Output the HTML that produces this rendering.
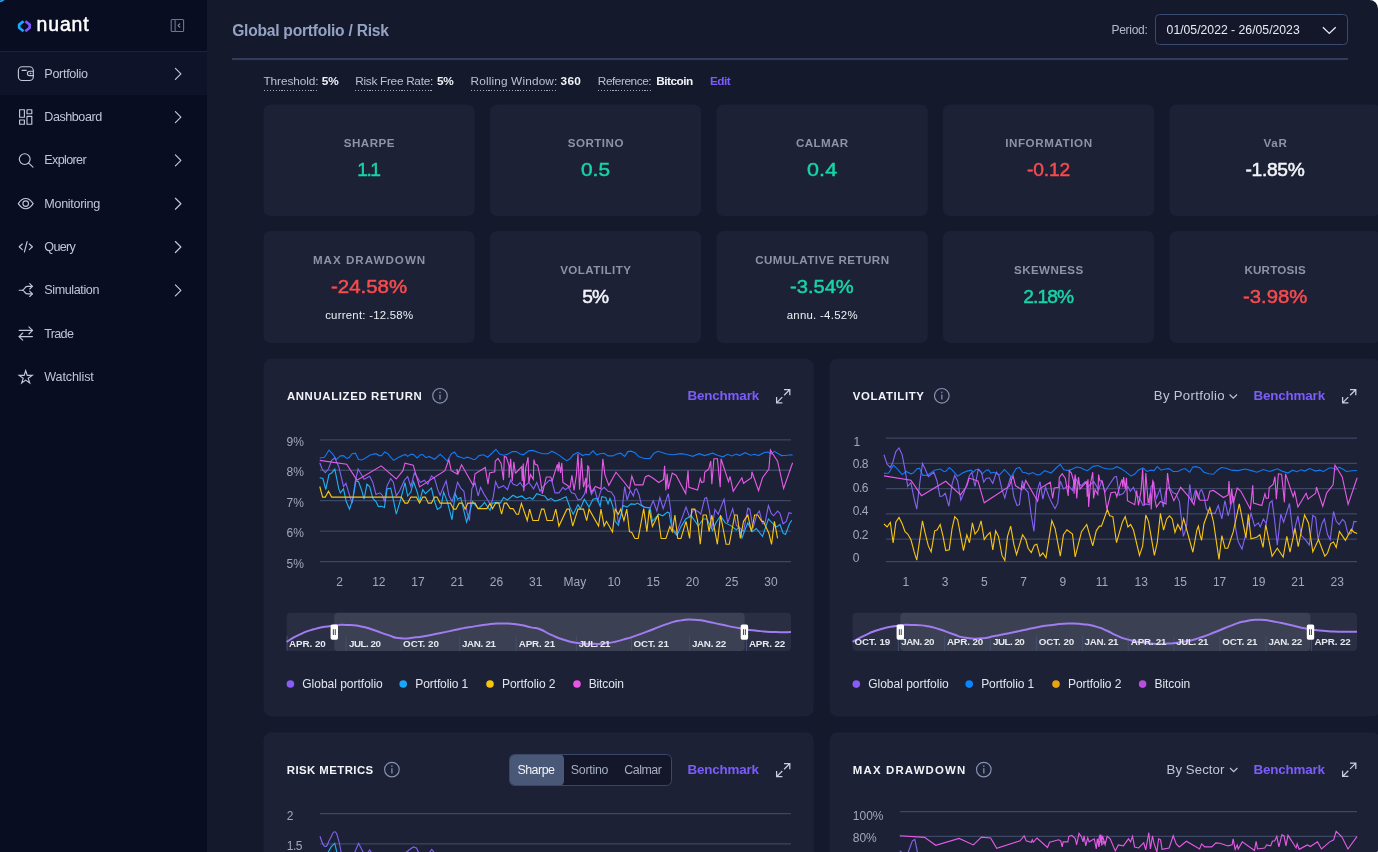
<!DOCTYPE html>
<html lang="en">
<head>
<meta charset="utf-8">
<title>Nuant - Global portfolio / Risk</title>
<style>
*{box-sizing:border-box;margin:0;padding:0}
html,body{width:1378px;height:852px;overflow:hidden;background:#ffffff}
body{font-family:"Liberation Sans", sans-serif;color:#c9cede;position:relative}
#app{position:absolute;left:0;top:0;width:1378px;height:852px;background:#14192c;border-top-right-radius:8.5px;border-bottom-right-radius:2px;overflow:hidden;will-change:transform}
.a{position:absolute}
.t{position:absolute;white-space:pre;line-height:1}
#side{position:absolute;left:0;top:0;width:207px;height:852px;background:#080d22}
#side .hd{position:absolute;left:0;top:0;width:207px;height:52px;border-bottom:1px solid #1d2238}
#side .act{position:absolute;left:0;top:52px;width:207px;height:43px;background:#0e132a}
#main{position:absolute;left:0;top:0;width:1378px;height:852px}
.hr{position:absolute;left:232px;top:58px;width:1116px;height:2px;background:#323d5b}
.sel{position:absolute;left:1155px;top:14px;width:193px;height:31px;border:1px solid #3a4a70;border-radius:4.5px;background:#131729}
.u{position:absolute;top:90px;height:1px;background:repeating-linear-gradient(90deg,#a2a8bd 0,#a2a8bd 1.1px,transparent 1.1px,transparent 2.9px)}
.card{position:absolute;width:211.2px;height:111.5px}
.panel{position:absolute;overflow:hidden}
.tg{position:absolute;left:509.3px;top:753.9px;width:162.6px;height:31.8px;border:1px solid #3a4767;border-radius:5.5px;background:#131729;overflow:hidden}
.tg i{position:absolute;left:-1px;top:-1px;width:55px;height:31.8px;background:#4a5878;border-radius:5px}
</style>
</head>
<body>
<div id="app">
<main id="main">
<header><span class="t" style="left:232.20px;top:23.00px;font-size:15.6px;color:#95a3c3;font-weight:bold;letter-spacing:-0.242px;">Global portfolio / Risk</span><div class="sel"></div><span class="t" style="left:1111.50px;top:24.00px;font-size:12px;color:#b4bacb;letter-spacing:-0.289px;">Period:</span><span class="t" style="left:1166.60px;top:24.00px;font-size:12.2px;color:#e9ebf3;letter-spacing:0.012px;">01/05/2022 - 26/05/2023</span><svg class="a" style="left:1320px;top:24px" width="18" height="12" viewBox="1320 24 18 12" fill="none"><path d="M1322.9 27.2L1329.3 33.4L1335.7 27.2" stroke="#e9ebf3" stroke-width="1.3"/></svg></header>
<div class="hr"></div>
<section id="params"><span class="t" style="left:263.50px;top:76.00px;font-size:11.8px;color:#bcc1d1;letter-spacing:-0.083px;">Threshold:</span><span class="t" style="left:321.80px;top:76.00px;font-size:11.8px;color:#f3f4f9;font-weight:bold;letter-spacing:-0.062px;">5%</span><span class="t" style="left:355.30px;top:76.00px;font-size:11.8px;color:#bcc1d1;letter-spacing:-0.290px;">Risk Free Rate:</span><span class="t" style="left:437.00px;top:76.00px;font-size:11.8px;color:#f3f4f9;font-weight:bold;letter-spacing:-0.262px;">5%</span><span class="t" style="left:470.50px;top:76.00px;font-size:11.8px;color:#bcc1d1;letter-spacing:0.159px;">Rolling Window:</span><span class="t" style="left:560.60px;top:76.00px;font-size:11.8px;color:#f3f4f9;font-weight:bold;letter-spacing:0.256px;">360</span><span class="t" style="left:597.80px;top:76.00px;font-size:11.8px;color:#bcc1d1;letter-spacing:-0.435px;">Reference:</span><span class="t" style="left:656.20px;top:76.00px;font-size:11.8px;color:#f3f4f9;font-weight:bold;letter-spacing:-0.497px;">Bitcoin</span><span class="t" style="left:710.00px;top:76.00px;font-size:11.8px;color:#7c5cfc;font-weight:bold;letter-spacing:-0.560px;">Edit</span><div class="u" style="left:263.5px;width:54.8px"></div><div class="u" style="left:355.3px;width:77.9px"></div><div class="u" style="left:470.5px;width:86.8px"></div><div class="u" style="left:597.8px;width:53.8px"></div></section>
<svg class="a" style="left:0;top:0" width="1378" height="852" viewBox="0 0 1378 852" fill="#1c2135"><rect x="263.50" y="104.4" width="211.2" height="111.6" rx="7"/><rect x="490.00" y="104.4" width="211.2" height="111.6" rx="7"/><rect x="716.50" y="104.4" width="211.2" height="111.6" rx="7"/><rect x="943.00" y="104.4" width="211.2" height="111.6" rx="7"/><rect x="1169.50" y="104.4" width="211.2" height="111.6" rx="7"/><rect x="263.50" y="231.0" width="211.2" height="112.0" rx="7"/><rect x="490.00" y="231.0" width="211.2" height="112.0" rx="7"/><rect x="716.50" y="231.0" width="211.2" height="112.0" rx="7"/><rect x="943.00" y="231.0" width="211.2" height="112.0" rx="7"/><rect x="1169.50" y="231.0" width="211.2" height="112.0" rx="7"/><rect x="263.5" y="358.6" width="550.2" height="357.8" rx="8"/><rect x="829.5" y="358.6" width="551" height="357.8" rx="8"/><rect x="263.5" y="732.2" width="550.2" height="140" rx="8"/><rect x="829.5" y="732.2" width="551" height="140" rx="8"/></svg>
<section id="stats">
<div class="card" style="left:263.50px;top:104.5px"><span class="t" style="left:80.25px;top:32.50px;font-size:11.6px;color:#8e93a6;font-weight:bold;letter-spacing:0.474px;">SHARPE</span><span class="t" style="left:93.76px;top:55.50px;font-size:19.2px;color:#17d4a6;letter-spacing:-1.500px;-webkit-text-stroke:0.5px #17d4a6;">1.1</span></div>
<div class="card" style="left:490.00px;top:104.5px"><span class="t" style="left:77.75px;top:32.50px;font-size:11.6px;color:#8e93a6;font-weight:bold;letter-spacing:0.479px;">SORTINO</span><span class="t" style="left:91.10px;top:55.50px;font-size:19.2px;color:#17d4a6;-webkit-text-stroke:0.5px #17d4a6;transform:scaleX(1.087);transform-origin:0 0;">0.5</span></div>
<div class="card" style="left:716.50px;top:104.5px"><span class="t" style="left:79.60px;top:32.50px;font-size:11.6px;color:#8e93a6;font-weight:bold;letter-spacing:0.353px;">CALMAR</span><span class="t" style="left:90.50px;top:55.50px;font-size:19.2px;color:#17d4a6;letter-spacing:0.138px;-webkit-text-stroke:0.5px #17d4a6;transform:scaleX(1.12);transform-origin:0 0;">0.4</span></div>
<div class="card" style="left:943.00px;top:104.5px"><span class="t" style="left:62.15px;top:32.50px;font-size:11.6px;color:#8e93a6;font-weight:bold;letter-spacing:0.596px;">INFORMATION</span><span class="t" style="left:84.10px;top:55.50px;font-size:19.2px;color:#f74b4e;letter-spacing:-0.184px;-webkit-text-stroke:0.5px #f74b4e;">-0.12</span></div>
<div class="card" style="left:1169.50px;top:104.5px"><span class="t" style="left:93.90px;top:32.50px;font-size:11.6px;color:#8e93a6;font-weight:bold;letter-spacing:0.739px;">VaR</span><span class="t" style="left:75.95px;top:55.50px;font-size:19.2px;color:#f3f4f9;letter-spacing:-0.299px;-webkit-text-stroke:0.5px #f3f4f9;">-1.85%</span></div>
<div class="card" style="left:263.50px;top:231.0px"><span class="t" style="left:49.45px;top:23.00px;font-size:11.6px;color:#8e93a6;font-weight:bold;letter-spacing:1.016px;">MAX DRAWDOWN</span><span class="t" style="left:67.50px;top:46.00px;font-size:19.2px;color:#f74b4e;-webkit-text-stroke:0.5px #f74b4e;transform:scaleX(1.066);transform-origin:0 0;">-24.58%</span><span class="t" style="left:61.65px;top:79.00px;font-size:11.4px;color:#eceef5;letter-spacing:0.245px;">current: -12.58%</span></div>
<div class="card" style="left:490.00px;top:231.0px"><span class="t" style="left:70.15px;top:33.00px;font-size:11.6px;color:#8e93a6;font-weight:bold;letter-spacing:0.459px;">VOLATILITY</span><span class="t" style="left:92.25px;top:56.00px;font-size:19.2px;color:#f3f4f9;letter-spacing:-1.034px;-webkit-text-stroke:0.5px #f3f4f9;">5%</span></div>
<div class="card" style="left:716.50px;top:231.0px"><span class="t" style="left:38.65px;top:23.00px;font-size:11.6px;color:#8e93a6;font-weight:bold;letter-spacing:0.452px;">CUMULATIVE RETURN</span><span class="t" style="left:73.75px;top:46.00px;font-size:19.2px;color:#17d4a6;-webkit-text-stroke:0.5px #17d4a6;transform:scaleX(1.048);transform-origin:0 0;">-3.54%</span><span class="t" style="left:70.15px;top:79.00px;font-size:11.4px;color:#eceef5;letter-spacing:0.285px;">annu. -4.52%</span></div>
<div class="card" style="left:943.00px;top:231.0px"><span class="t" style="left:71.05px;top:33.00px;font-size:11.6px;color:#8e93a6;font-weight:bold;letter-spacing:0.392px;">SKEWNESS</span><span class="t" style="left:80.20px;top:56.00px;font-size:19.2px;color:#17d4a6;letter-spacing:-0.902px;-webkit-text-stroke:0.5px #17d4a6;">2.18%</span></div>
<div class="card" style="left:1169.50px;top:231.0px"><span class="t" style="left:74.90px;top:33.00px;font-size:11.6px;color:#8e93a6;font-weight:bold;letter-spacing:0.242px;">KURTOSIS</span><span class="t" style="left:73.40px;top:56.00px;font-size:19.2px;color:#f74b4e;-webkit-text-stroke:0.5px #f74b4e;transform:scaleX(1.059);transform-origin:0 0;">-3.98%</span></div>
</section>
<section class="panel" style="left:264px;top:359px;width:550px;height:357px"><svg class="a chart" style="left:0;top:0" width="550" height="357" viewBox="264 359 550 357" fill="none" font-family='"Liberation Sans", sans-serif'><path d="M320 439.80H791" stroke="#3b4763" stroke-width="1.3"/><path d="M320 470.25H791" stroke="#3b4763" stroke-width="1.3"/><path d="M320 500.70H791" stroke="#3b4763" stroke-width="1.3"/><path d="M320 531.15H791" stroke="#3b4763" stroke-width="1.3"/><path d="M320 561.60H791" stroke="#3b4763" stroke-width="1.3"/><polyline points="319.75,457.97 324.5,457.18 328.94,450.05 332.43,453.69 336.39,459.55 340.35,455.91 343.51,455.59 346.68,458.45 349.06,457.65 352.23,453.69 355.4,453.22 358.56,459.55 361.73,460.03 365.69,457.97 369.65,455.28 372.82,454.33 375.99,453.69 379.16,455.59 381.53,455.59 384.7,451.95 387.87,453.69 391.04,457.65 393.73,460.35 397.38,457.97 401.34,455.91 405.3,454.49 407.67,456.39 410.84,454.33 413.22,454.33 417.18,457.97 420.35,454.8 422.72,454.49 425.89,457.65 429.06,456.39 434.6,459.24 440.15,454.33 443.32,457.18 447.28,461.14 451.24,454.01 454.41,451.95 457.57,456.39 460.74,457.18 463.91,458.45 467.08,457.18 470.25,457.97 473.42,459.55 475,459.55 478.96,455.59 483.71,454.8 487.67,457.18 492.43,452.74 495.91,449.26 499.55,454.01 503.51,455.28 507.48,454.33 512.23,451.63 516.19,451.63 520.15,454.01 523.32,454.8 528.86,450.84 532.82,450.37 538.37,452.43 543.12,453.69 547.87,453.69 551.83,451.16 555.79,453.22 559.75,455.59 563.71,458.76 566.88,460.66 570.05,458.76 573.22,454.8 577.97,452.43 582.72,455.59 585.89,454.33 589.06,454.8 593.02,450.84 596.66,454.8 600.15,453.69 604.11,453.22 608.07,455.91 612.82,455.91 616.78,454.01 620.74,453.22 624.7,456.39 627.87,451.63 631.04,451.16 635,452.74 638.96,456.86 644.5,458.45 650.05,458.45 654.01,453.22 657.97,451.32 661.93,452.43 666.68,454.01 673.02,454.8 680.94,453.69 687.28,454.8 692.82,456.39 699.16,453.69 704.7,455.59 712.62,453.22 717.38,455.28 722.92,456.86 727.67,454.33 731.63,455.91 736.39,454.01 739.55,455.59 745.1,452.74 750.64,455.28 754.6,454.33 758.56,455.59 764.11,452.43 768.07,452.11 771.24,454.01 774.41,451.32 777.57,453.22 781.53,455.59 787.08,455.28 791.04,454.8 792.62,455.28" stroke="#1279f2" stroke-width="1.12"/><polyline points="319.75,462.72 322.13,469.06 325.3,472.7 328.47,469.06 331.63,460.35 334.8,457.97 338.76,466.68 343.51,486.49 345.89,483.32 349.06,493.61 352.23,503.12 355.4,480.94 358.09,469.06 360.94,473.81 364.11,479.36 369.65,476.19 372.82,482.52 375.99,494.41 379.95,492.82 382.33,495.2 384.39,501.53 387.08,485.69 390.72,478.56 393.42,482.52 396.27,495.99 399.75,490.45 404.5,480.15 407.67,476.5 410.84,486.49 414.33,473.02 417.18,476.98 420.35,482.52 424.31,480.15 427.79,484.11 431.44,475.87 434.6,478.56 437.77,489.65 440.15,495.2 443.32,487.28 446.17,480.94 448.86,495.2 452.03,501.53 455.2,492.03 457.57,482.21 460.74,488.07 463.91,491.24 467.08,512.62 469.46,520.54 471.83,488.86 475,482.52 478.17,495.99 480.54,487.28 483.71,493.61 487.67,499.95 490.84,505.5 493.22,496.78 495.59,481.73 498.45,488.07 503.51,485.69 507.48,489.65 510.64,480.15 513.02,484.11 516.98,485.69 520.15,482.52 523.32,487.28 528.86,482.52 533.61,488.86 536.78,482.52 539.95,491.24 543.12,486.49 549.46,480.15 551.83,480.94 555,492.82 558.96,492.82 562.92,487.28 565.3,489.65 568.47,487.28 571.63,492.82 574.8,493.61 577.97,499.95 581.14,499.16 584.31,494.41 585.89,488.86 588.74,484.9 591.44,494.41 594.6,488.86 597.77,500.74 600.94,490.45 604.11,487.28 608.07,491.24 611.24,492.03 614.41,496.78 618.37,522.92 621.53,514.21 624.7,486.49 627.08,499.95 630.25,490.45 633.42,495.99 635,489.65 636.58,488.86 638.96,494.41 641.34,504.7 644.5,507.08 650.05,507.87 653.22,500.74 656.86,511.04 659.87,497.57 663.2,508.66 668.27,493.61 670.64,509.46 672.23,528.47 676.5,533.22 686.01,507.08 689.65,517.38 693.61,509.46 698.37,511.83 700.74,514.21 704.7,498.37 706.6,497.57 709.46,511.04 711.83,528.47 715,509.46 718.17,514.21 724.03,499.16 727.67,522.92 732.74,508.66 736.39,525.3 740.35,528.47 743.51,531.63 747.79,508.19 749.85,509.46 753.02,528.47 756.98,514.21 759.36,511.04 762.52,523.71 764.9,523.71 768.39,505.5 771.24,513.42 773.61,515.79 777.57,511.04 779.95,513.42 783.12,523.71 786.29,521.34 788.98,512.62 791.83,513.42" stroke="#8262f4" stroke-width="1.12"/><polyline points="319.75,477.77 322.92,478.56 325.77,489.65 328.94,474.6 331.63,473.02 334.8,469.06 338.76,488.86 340.35,492.82 343.51,488.86 346.21,501.53 349.53,509.14 353.02,498.37 355.87,480.94 358.56,481.73 361.73,490.45 364.11,499.16 366.96,484.11 369.65,486.49 372.82,498.37 375.99,501.53 378.37,506.6 381.53,506.29 384.39,507.55 387.08,488.86 390.72,488.07 393.73,501.53 396.27,514.21 400.54,499.95 404.98,482.52 407.67,495.99 410.84,492.03 413.53,481.73 417.18,492.03 419.55,501.53 422.72,489.65 425.42,493.61 431.44,488.07 434.6,501.53 437.3,509.46 440.94,507.08 443.63,492.03 447.28,501.53 452.03,519.75 455.2,493.61 457.57,499.16 460.74,497.57 463.91,511.04 466.6,522.13 469.46,512.62 472.62,501.53 475,504.7 478.17,508.66 481.34,506.29 484.5,502.33 490.05,510.25 492.43,503.12 496.39,502.33 500.35,503.12 503.51,497.57 507.48,499.95 513.02,495.2 516.98,497.57 521.73,495.99 525.69,499.16 529.65,497.57 532.82,499.16 536.78,493.61 541.53,495.2 544.7,495.99 547.87,499.95 551.04,498.37 555,501.22 560.54,499.16 566.09,496.78 570.05,507.87 573.22,514.21 577.97,504.7 580.35,508.66 584.31,499.16 589.06,507.08 593.02,499.16 596.98,498.37 600.15,506.29 601.73,496.78 605.69,497.57 608.07,503.91 609.97,498.37 612.82,506.29 615.2,521.34 618.37,525.3 623.12,505.5 627.08,507.08 631.04,503.91 635,504.39 637.38,503.12 641.34,505.5 644.5,507.55 650.05,507.87 652.43,521.34 658.76,514.21 662.72,515.79 667.48,512.15 669.06,512.62 672.23,530.05 676.98,535.59 680.94,526.88 685.69,518.96 691.24,515.79 698.37,526.09 703.12,518.96 707.08,518.96 712.62,530.84 715.79,522.92 720.54,515.79 725.3,522.92 730.84,525.61 736.39,530.05 738.76,526.88 741.93,537.97 747.79,522.92 752.23,531.63 756.19,528.47 762.52,536.39 768.39,518.96 772.82,523.71 776.78,526.88 779.95,524.5 783.12,533.22 785.5,534.49 789.46,523.71 791.83,520.23" stroke="#1fb0f2" stroke-width="1.12"/><polyline points="319.75,486.49 322.6,497.1 325.3,497.1 328.47,491.24 331.63,497.1 401.34,497.1 404.98,503.12 407.67,503.12 410.84,497.1 416.39,497.1 419.55,503.12 422.72,497.1 425.42,497.1 428.27,503.12 431.44,503.12 434.6,497.1 436.98,497.1 440.15,503.12 450.45,503.12 453.61,509.14 455.99,509.14 459.16,503.12 462.33,503.12 465.18,509.14 467.87,503.12 474.21,503.12 475,503.12 478.17,508.66 486.88,508.66 490.05,503.44 492.43,508.66 495.59,503.12 498.76,503.12 501.61,514.21 504.31,503.12 506.68,503.12 510.17,508.66 513.02,508.66 516.5,514.21 518.56,514.21 521.42,503.44 527.28,520.54 529.65,509.14 532.82,520.54 538.37,520.54 541.53,509.14 543.91,509.14 547.08,520.54 552.62,520.54 555.79,509.14 558.96,526.09 566.88,509.14 569.26,509.14 572.74,526.09 577.97,509.14 583.51,509.14 586.68,520.54 589.06,509.14 598.56,526.09 600.94,509.14 604.11,526.09 606.49,521.34 612.5,531.95 615.2,509.14 618.37,514.21 620.74,509.14 623.91,520.54 626.76,509.14 629.46,531.63 631.83,532.43 634.21,537.18 635,538.45 638.17,538.45 643.71,508.66 646.88,531.63 649.26,509.46 652.43,526.56 657.97,515 661.14,538.45 665.89,538.45 669.85,526.56 672.23,531.63 674.92,515 677.77,538.45 680.94,538.45 686.01,521.34 689.65,538.45 691.71,509.14 694.88,509.14 697.57,520.54 700.27,544.31 703.12,515 706.29,515 709.14,531.63 711.83,515 717.38,544.31 720.54,515 726.09,544.31 729.26,544.31 734.8,515 737.18,515 740.35,538.45 743.51,521.34 747.79,515 751.44,531.63 754.6,515 757.77,515 761.73,521.34 763.32,521.34 768.86,533.22 771.55,544.31 774.41,521.34 777.57,538.45" stroke="#f7c514" stroke-width="1.12"/><polyline points="319.75,460.35 346.68,464.31 356.98,480.15 381.22,465.89 396.27,479.04 402.92,470.64 404.98,463.2 413.22,465.1 419.55,486.96 444.9,470.64 448.86,459.55 451.24,470.64 457.57,474.29 456.78,469.06 458.37,473.02 461.53,464.78 473.42,485.69 475,473.81 485.3,467.48 487.99,484.11 489.57,473.02 494.8,471.75 495.28,461.14 497.97,458.45 501.14,463.51 503.51,480.15 504.31,456.39 506.37,457.18 509.06,465.89 509.06,477.77 510.64,458.76 512.23,480.94 513.81,461.93 515.4,473.02 516.5,472.23 521.73,466.68 522.21,480.94 523.32,463.51 523.79,491.24 525.69,468.27 528.07,457.18 528.86,482.52 530.45,474.6 533.3,479.36 533.93,459.55 535.2,464.31 537.57,465.1 539.95,476.19 542.33,493.61 546.29,476.98 550.72,476.98 552.15,480.94 555.79,469.06 557.38,464.31 558.17,471.44 558.96,461.93 560.54,473.02 561.81,462.72 562.92,482.52 570.05,487.28 571.95,475.4 574.01,490.45 576.39,475.4 577.97,454.01 579.55,489.65 581.46,457.97 583.51,487.28 585.89,477.77 586.21,493.61 587.79,465.89 588.74,466.68 589.85,484.11 591.44,492.03 595.4,486.49 600.94,488.86 602.84,458.76 604.9,474.6 608.86,485.38 615.99,472.23 623.91,481.73 629.46,488.86 631.83,476.19 635,484.9 642.92,484.9 645.3,476.98 648.47,475.4 652.43,477.77 658.76,482.52 663.51,479.36 664.62,465.89 665.89,490.45 667.16,473.81 668.27,488.86 672.23,473.02 676.19,475.4 685.69,493.61 688.07,470.64 688.86,487.28 697.57,490.13 700.27,478.56 701.53,482.52 703.91,481.73 704.7,472.23 708.66,469.06 710.72,461.14 711.83,484.11 713.89,458.76 717.38,458.76 720.23,487.28 721.02,458.76 728.47,481.73 730.05,476.5 733.22,491.24 741.93,477.77 743.51,483.32 751.44,477.77 751.91,471.75 758.56,490.76 762.52,477.77 768.86,469.06 770.45,450.05 772.82,454.01 777.57,461.14 783.59,488.54 792.62,462.72" stroke="#e55be6" stroke-width="1.12"/><text x="286.60" y="446.00" font-size="12" fill="#a3a8ba" letter-spacing="0.056">9%</text><text x="286.60" y="476.45" font-size="12" fill="#a3a8ba" letter-spacing="0.056">8%</text><text x="286.60" y="506.90" font-size="12" fill="#a3a8ba" letter-spacing="0.056">7%</text><text x="286.60" y="537.35" font-size="12" fill="#a3a8ba" letter-spacing="0.056">6%</text><text x="286.60" y="567.80" font-size="12" fill="#a3a8ba" letter-spacing="0.056">5%</text><text x="339.60" y="585.80" font-size="12" fill="#a3a8ba" text-anchor="middle">2</text><text x="378.81" y="585.80" font-size="12" fill="#a3a8ba" text-anchor="middle">12</text><text x="418.02" y="585.80" font-size="12" fill="#a3a8ba" text-anchor="middle">17</text><text x="457.23" y="585.80" font-size="12" fill="#a3a8ba" text-anchor="middle">21</text><text x="496.44" y="585.80" font-size="12" fill="#a3a8ba" text-anchor="middle">26</text><text x="535.65" y="585.80" font-size="12" fill="#a3a8ba" text-anchor="middle">31</text><text x="574.86" y="585.80" font-size="12" fill="#a3a8ba" text-anchor="middle">May</text><text x="614.07" y="585.80" font-size="12" fill="#a3a8ba" text-anchor="middle">10</text><text x="653.28" y="585.80" font-size="12" fill="#a3a8ba" text-anchor="middle">15</text><text x="692.49" y="585.80" font-size="12" fill="#a3a8ba" text-anchor="middle">20</text><text x="731.70" y="585.80" font-size="12" fill="#a3a8ba" text-anchor="middle">25</text><text x="770.91" y="585.80" font-size="12" fill="#a3a8ba" text-anchor="middle">30</text><circle cx="440" cy="395.8" r="7.3" stroke="#8893b1" stroke-width="1.15"/><path d="M440 394.5V399.6" stroke="#76809d" stroke-width="1.5"/><circle cx="440" cy="392.3" r="0.85" fill="#76809d"/><g stroke="#c9cddf" stroke-width="1.25" stroke-linecap="butt"><path d="M784.00 389.60H789.80V395.30M789.60 389.80L784.10 395.30"/><path d="M776.60 397.10V402.80H782.40M776.80 402.60L782.30 397.10"/></g><rect x="286.6" y="612.8" width="504.4" height="38.2" rx="4" fill="#2a2e43"/><rect x="334.2" y="612.8" width="410.5" height="38.2" rx="4" fill="#3b4052"/><path d="M287.1 635.8V651" stroke="#424e6e" stroke-width="1"/><path d="M346 635.8V651" stroke="#424e6e" stroke-width="1"/><path d="M401.3 635.8V651" stroke="#424e6e" stroke-width="1"/><path d="M459.6 635.8V651" stroke="#424e6e" stroke-width="1"/><path d="M516.2 635.8V651" stroke="#424e6e" stroke-width="1"/><path d="M576.4 635.8V651" stroke="#424e6e" stroke-width="1"/><path d="M631.5 635.8V651" stroke="#424e6e" stroke-width="1"/><path d="M689.6 635.8V651" stroke="#424e6e" stroke-width="1"/><path d="M746.6 635.8V651" stroke="#424e6e" stroke-width="1"/><path d="M286.60 641.89C290.69 639.56 289.75 639.12 298.87 634.91C307.99 630.70 303.27 632.21 313.96 629.25C324.65 626.29 320.25 627.49 330.94 626.04C341.63 624.59 335.98 624.78 346.04 624.91C356.10 625.04 351.70 624.66 361.13 626.42C370.56 628.18 365.53 627.36 374.34 630.19C383.15 633.02 378.75 632.21 387.55 634.91C396.35 637.61 391.32 637.48 400.75 638.30C410.18 639.12 405.79 638.49 415.85 637.36C425.91 636.23 419.62 636.99 430.94 634.91C442.26 632.83 437.23 633.65 449.81 631.13C462.39 628.61 456.10 629.56 468.68 627.36C481.26 625.16 476.23 625.79 487.55 624.53C498.87 623.27 492.58 623.58 502.64 623.58C512.70 623.58 508.31 623.27 517.74 624.53C527.17 625.79 523.52 625.79 530.94 627.36C538.36 628.93 533.21 626.73 540.00 629.25C546.79 631.77 543.14 631.33 551.32 634.91C559.50 638.49 555.72 637.30 564.53 640.00C573.34 642.70 568.31 641.76 577.74 643.02C587.17 644.28 582.77 643.77 592.83 643.77C602.89 643.77 597.86 644.40 607.92 643.02C617.98 641.64 612.96 642.32 623.02 639.62C633.08 636.92 628.05 638.37 638.11 634.91C648.17 631.45 643.15 633.03 653.21 629.25C663.27 625.47 658.87 626.54 668.30 623.58C677.73 620.62 672.70 621.64 681.51 620.38C690.32 619.12 685.92 619.37 694.72 619.81C703.52 620.25 699.12 620.13 707.92 621.70C716.72 623.27 710.44 622.33 721.13 624.53C731.82 626.73 728.05 626.23 740.00 628.30C751.95 630.37 745.03 629.49 756.98 630.75C768.93 632.01 764.53 631.64 775.85 632.08C787.17 632.52 785.91 632.08 790.94 632.08" stroke="#a07cf0" stroke-width="2" stroke-linecap="butt"/><text x="289.00" y="647.20" font-size="9.8" fill="#e6e8f0" font-weight="bold" letter-spacing="-0.039">APR. 20</text><text x="348.90" y="647.20" font-size="9.8" fill="#e6e8f0" font-weight="bold" letter-spacing="-0.460">JUL. 20</text><text x="403.00" y="647.20" font-size="9.8" fill="#e6e8f0" font-weight="bold" letter-spacing="0.010">OCT. 20</text><text x="462.00" y="647.20" font-size="9.8" fill="#e6e8f0" font-weight="bold" letter-spacing="-0.326">JAN. 21</text><text x="518.70" y="647.20" font-size="9.8" fill="#e6e8f0" font-weight="bold" letter-spacing="-0.105">APR. 21</text><text x="578.70" y="647.20" font-size="9.8" fill="#e6e8f0" font-weight="bold" letter-spacing="-0.527">JUL. 21</text><text x="633.40" y="647.20" font-size="9.8" fill="#e6e8f0" font-weight="bold" letter-spacing="-0.073">OCT. 21</text><text x="691.90" y="647.20" font-size="9.8" fill="#e6e8f0" font-weight="bold" letter-spacing="-0.276">JAN. 22</text><text x="748.90" y="647.20" font-size="9.8" fill="#e6e8f0" font-weight="bold" letter-spacing="-0.105">APR. 22</text><rect x="330.6" y="624.5" width="7.4" height="15.2" rx="1.6" fill="#ffffff"/><path d="M333.35 629.2V635M335.25 629.2V635" stroke="#2a2f45" stroke-width="0.9"/><rect x="740.7" y="624.5" width="7.4" height="15.2" rx="1.6" fill="#ffffff"/><path d="M743.45 629.2V635M745.35 629.2V635" stroke="#2a2f45" stroke-width="0.9"/><circle cx="290.4" cy="684" r="3.8" fill="#8a5cf6"/><circle cx="403.2" cy="684" r="3.8" fill="#1aa7fb"/><circle cx="490" cy="684" r="3.8" fill="#f7c410"/><circle cx="577" cy="684" r="3.8" fill="#ea55e6"/></svg><span class="t" style="left:22.90px;top:32.00px;font-size:11.4px;color:#f3f4f9;font-weight:bold;letter-spacing:0.639px;">ANNUALIZED RETURN</span><span class="t" style="left:423.40px;top:30.00px;font-size:13.4px;color:#7c5cfc;font-weight:bold;letter-spacing:-0.142px;">Benchmark</span><span class="t" style="left:38.30px;top:319.00px;font-size:12px;color:#e2e5ee;letter-spacing:-0.015px;">Global portfolio</span><span class="t" style="left:151.30px;top:319.00px;font-size:12px;color:#e2e5ee;letter-spacing:-0.103px;">Portfolio 1</span><span class="t" style="left:238.00px;top:319.00px;font-size:12px;color:#e2e5ee;letter-spacing:-0.053px;">Portfolio 2</span><span class="t" style="left:324.70px;top:319.00px;font-size:12px;color:#e2e5ee;letter-spacing:-0.122px;">Bitcoin</span></section>
<section class="panel" style="left:830px;top:359px;width:550px;height:357px"><svg class="a chart" style="left:0;top:0" width="550" height="357" viewBox="830 359 550 357" fill="none" font-family='"Liberation Sans", sans-serif'><path d="M886 438.1H1357" stroke="#3b4763" stroke-width="1.3"/><path d="M886 463.4H1357" stroke="#3b4763" stroke-width="1.3"/><path d="M886 488.6H1357" stroke="#3b4763" stroke-width="1.3"/><path d="M886 513.8H1357" stroke="#3b4763" stroke-width="1.3"/><path d="M886 539.1H1357" stroke="#3b4763" stroke-width="1.3"/><path d="M886 561.6H1357" stroke="#3b4763" stroke-width="1.3"/><polyline points="883.96,473.34 888.71,473.02 893.47,465.1 897.43,469.06 902.18,474.6 906.14,471.44 910.89,473.81 913.27,473.02 917.23,468.58 919.6,468.27 922.77,475.4 926.73,475.4 930.69,473.02 934.65,470.17 940.2,469.06 944.16,471.75 946.22,471.12 949.23,467.48 952.08,469.85 957.62,476.19 962.38,473.02 967.13,471.12 971.09,470.17 973.47,472.23 975.84,469.53 979.01,469.53 982.18,473.81 986.14,470.17 988.51,469.85 990.89,473.02 994.06,472.23 999.6,474.92 1004.36,469.53 1007.52,472.7 1011.17,476.98 1016.24,468.58 1019.41,467.48 1022.57,472.23 1025.74,472.7 1028.91,474.13 1032.87,472.54 1036.83,474.92 1040,474.6 1044.75,470.64 1051.09,473.02 1055.84,468.27 1060.28,464.31 1063.76,469.85 1068.51,470.64 1072.48,469.06 1076.44,467 1080.4,467.48 1084.36,469.85 1087.52,470.64 1093.07,466.37 1097.82,465.57 1103.37,467.95 1108.12,469.06 1112.55,469.06 1116.83,466.68 1120.79,468.58 1124.75,471.12 1131.09,476.19 1135.05,473.81 1138.22,470.17 1142.97,467.95 1146.93,471.44 1150.89,470.17 1154.06,470.64 1157.23,466.68 1161.19,470.17 1165.15,469.06 1169.11,468.58 1173.07,471.44 1177.82,471.44 1181.78,469.53 1184.95,468.58 1189.7,472.23 1192.87,467 1196.04,466.68 1200,467.95 1203.96,472.23 1208.71,473.81 1213.47,474.29 1217.43,470.17 1221.39,467.48 1226.14,468.27 1231.68,470.17 1238.02,470.64 1245.15,469.06 1251.49,470.64 1257.03,472.23 1263.37,469.53 1269.7,471.44 1277.31,468.74 1282.06,471.12 1287.92,473.02 1292.67,470.17 1296.63,471.75 1301.39,469.85 1304.55,471.12 1309.62,468.58 1315.64,471.12 1319.6,470.17 1323.56,471.44 1329.11,467.95 1332.75,467.95 1335.92,469.85 1339.09,467.16 1342.57,469.06 1346.53,471.44 1352.08,470.8 1356.83,470.49" stroke="#1279f2" stroke-width="1.12"/><polyline points="883.96,454.8 887.13,464.31 890.3,467.48 892.67,462.72 895.84,451.63 899.01,447.99 902.18,454.8 905.35,471.44 907.72,486.49 910.89,482.52 914.06,498.37 916.75,509.14 919.6,484.11 922.46,463.51 925.15,469.06 928.32,476.5 933.86,472.23 937.03,480.94 939.88,496.47 942.57,495.99 945.27,493.3 948.91,506.29 952.08,484.11 954.77,475.4 957.62,480.94 960.79,499.95 963.96,492.82 969.5,475.4 971.88,472.23 975.05,486.49 978.22,469.06 981.39,472.23 983.76,482.21 986.14,478.56 989.31,477.77 992.79,483.32 996.44,472.23 998.81,475.4 1001.98,489.65 1004.83,498.05 1007.52,487.28 1010.69,476.98 1013.86,496.78 1017.03,505.5 1019.41,504.7 1022.26,480.62 1024.95,488.86 1028.12,492.03 1031.29,515.79 1033.98,531.32 1036.83,492.03 1040,481.73 1042.85,499.16 1045.54,487.28 1048.71,495.99 1051.88,503.12 1055.05,508.66 1057.74,503.12 1060.28,480.94 1063.45,488.86 1068.51,485.69 1072.48,490.45 1075.17,476.98 1078.02,483.32 1081.5,485.69 1085.15,481.73 1088.32,486.49 1093.86,481.73 1098.61,489.65 1101.78,480.94 1104.95,492.03 1108.12,486.49 1114.46,476.98 1116.51,476.5 1119.21,495.2 1123.17,493.61 1127.92,486.49 1130.3,491.24 1133.47,487.28 1136.95,495.99 1139.49,497.57 1142.97,505.5 1145.82,503.91 1149.31,504.7 1150.89,487.28 1153.27,483.32 1156.44,498.37 1160.08,488.86 1163.25,507.08 1165.94,490.45 1169.11,487.28 1173.07,492.82 1175.92,493.61 1179.41,501.53 1183.37,536.39 1186.53,526.88 1189.7,484.43 1192.08,502.33 1195.25,490.45 1198.42,498.37 1200,491.24 1201.58,489.65 1203.96,495.99 1206.34,508.66 1209.5,513.42 1215.05,513.42 1218.22,505.5 1221.86,518.96 1224.87,500.74 1228.2,515.79 1233.27,495.99 1235.64,528.47 1238.02,541.14 1241.98,549.06 1251.01,513.42 1254.65,526.09 1258.3,522.92 1260.2,526.88 1263.37,518.96 1266.22,523.71 1269.7,503.12 1272.08,500.74 1274.46,518.96 1277.31,545.1 1280.79,514.21 1283.64,522.13 1289.5,503.44 1293.15,534.8 1297.9,515.79 1301.39,535.59 1305.35,539.55 1309.31,545.1 1312.79,515.48 1315.64,517.38 1318.02,539.55 1321.98,523.71 1324.36,518.96 1327.52,534.49 1330.22,539.55 1333.54,511.51 1336.24,521.34 1339.09,524.5 1342.57,519.28 1344.95,521.81 1348.12,534.49 1351.29,533.22 1353.98,521.34 1356.83,521.81" stroke="#8262f4" stroke-width="1.12"/><polyline points="883.96,524.03 887.13,526.88 890.3,522.45 893.15,543.04 895.84,522.13 899.01,517.38 902.18,523.71 905.03,531.63 907.72,534.01 910.89,539.55 914.06,551.44 916.75,560.15 922.46,520.86 925.15,533.22 928.32,545.89 931.17,551.91 934.65,530.84 937.03,530.05 940.2,524.5 943.05,536.39 945.74,550.64 949.23,549.85 952.08,528.47 954.77,516.58 957.62,519.75 960.79,536.39 963.49,550.64 966.81,534.8 969.5,542.72 972.36,522.92 975.05,534.01 978.22,530.05 981.07,520.86 984.24,539.55 986.93,535.59 990.1,532.43 992.79,549.85 995.64,530.84 998.5,536.39 1001.98,555.4 1004.83,560.47 1007.52,536.39 1010.69,526.09 1013.86,544.31 1016.55,554.6 1022.57,534.8 1025.74,539.55 1028.12,548.27 1031.29,552.54 1034.46,545.1 1036.83,544.31 1040,556.19 1042.85,553.02 1046.02,557.77 1051.88,520.54 1055.05,528.47 1060.28,556.19 1063.45,534.8 1066.93,529.73 1072.48,534.01 1075.17,556.98 1081.5,531.63 1086.73,524.5 1092.75,545.89 1096.24,530.84 1099.41,526.09 1101.47,526.09 1107.33,509.46 1109.7,515.79 1112.87,516.58 1116.51,542.72 1122.38,522.13 1125.23,516.58 1127.92,526.88 1130.61,524.5 1133.47,530.05 1139.49,555.4 1142.65,545.89 1145.82,515 1148.51,521.34 1154.38,555.4 1157.23,542.72 1160.4,513.42 1163.56,530.05 1166.73,518.96 1169.58,515.79 1172.28,518.96 1174.97,532.43 1177.82,524.5 1180.67,530.05 1183.68,518.64 1192.87,552.23 1196.83,530.05 1198.42,526.09 1200,534.8 1201.58,540.35 1203.96,523.71 1209.82,507.55 1213.47,521.81 1219.01,559.36 1221.86,535.59 1225.03,548.27 1227.72,548.27 1233.27,531.63 1239.29,503.91 1245.94,537.97 1248.32,514.21 1251.01,538.76 1256.71,537.18 1259.88,534.8 1263.05,547.48 1265.74,524.5 1272.08,556.19 1277.31,548.27 1283.17,556.98 1286.81,536.39 1289.98,552.23 1295.05,528.47 1298.22,546.68 1304.55,515 1308.51,522.92 1312.79,551.91 1318.5,539.55 1324.83,556.19 1327.52,553.02 1330.69,543.51 1333.54,541.93 1336.24,547.48 1339.41,531.32 1345.43,540.35 1351.29,529.26 1353.66,531.95 1357.15,533.53" stroke="#f7c514" stroke-width="1.12"/><polyline points="883.96,475.87 910.89,480.15 921.5,495.67 945.74,481.26 960.48,494.88 966.81,486.01 969.19,478.09 977.9,480.94 984.24,502.8 1009.11,486.49 1013.07,475.87 1015.45,485.69 1021.78,489.65 1021.47,484.9 1023.37,488.07 1025.74,480.47 1037.62,501.22 1040,488.54 1050.3,482.21 1052.67,498.37 1054.26,488.07 1058.69,487.28 1059.33,477.46 1062.18,473.81 1065.35,478.56 1068.2,495.99 1069.31,470.64 1071.37,473.02 1073.58,480.94 1074.06,493.61 1075.17,474.6 1076.75,498.37 1078.5,476.98 1080.08,488.86 1081.5,487.28 1086.73,481.73 1087.21,496.78 1088,479.36 1088.63,507.08 1090.38,484.11 1092.75,472.23 1093.54,498.37 1095.13,489.65 1097.82,494.41 1098.61,474.6 1099.88,480.94 1102.26,480.94 1104.63,492.03 1106.85,509.46 1110.97,492.82 1115.25,492.03 1116.83,496.78 1120.48,484.11 1122.06,479.36 1122.85,487.28 1123.64,476.98 1125.23,488.86 1126.5,477.77 1127.45,500.74 1134.73,504.7 1136.63,490.45 1138.53,505.5 1141.07,490.45 1142.65,469.06 1144.24,505.5 1145.82,473.02 1148.2,503.12 1150.57,492.82 1151.21,509.46 1152.79,480.94 1153.74,482.52 1154.85,499.16 1156.44,507.08 1160.4,501.53 1165.94,503.91 1167.52,473.02 1169.58,489.65 1173.86,500.74 1180.67,487.28 1188.91,496.78 1193.98,504.7 1196.51,491.24 1200,500.27 1207.6,500.27 1209.82,491.24 1213.47,490.45 1217.43,493.3 1223.45,497.57 1228.2,494.88 1228.99,480.94 1230.42,504.7 1231.68,488.86 1233.27,503.12 1237.23,488.07 1240.87,491.24 1250.38,509.14 1252.75,485.38 1253.54,503.12 1261.78,505.5 1264.95,493.93 1266.22,498.37 1268.44,498.05 1269.23,487.59 1273.19,484.43 1274.93,476.5 1276.36,499.16 1278.42,473.81 1281.58,474.29 1284.44,502.33 1285.54,473.81 1293.15,496.78 1294.73,491.71 1297.9,507.08 1306.14,493.3 1308.04,499.16 1315.64,493.3 1316.44,486.96 1322.77,506.29 1326.73,492.82 1333.07,484.9 1334.97,465.1 1337.5,469.06 1342.26,476.98 1348.12,504.39 1357.15,477.77" stroke="#e55be6" stroke-width="1.12"/><text x="853.60" y="445.60" font-size="12" fill="#a3a8ba">1</text><text x="852.70" y="467.90" font-size="12" fill="#a3a8ba" letter-spacing="-0.444">0.8</text><text x="852.70" y="491.90" font-size="12" fill="#a3a8ba" letter-spacing="-0.444">0.6</text><text x="852.70" y="515.40" font-size="12" fill="#a3a8ba" letter-spacing="-0.444">0.4</text><text x="852.70" y="539.40" font-size="12" fill="#a3a8ba" letter-spacing="-0.444">0.2</text><text x="852.70" y="562.10" font-size="12" fill="#a3a8ba">0</text><text x="905.90" y="585.80" font-size="12" fill="#a3a8ba" text-anchor="middle">1</text><text x="945.11" y="585.80" font-size="12" fill="#a3a8ba" text-anchor="middle">3</text><text x="984.32" y="585.80" font-size="12" fill="#a3a8ba" text-anchor="middle">5</text><text x="1023.53" y="585.80" font-size="12" fill="#a3a8ba" text-anchor="middle">7</text><text x="1062.74" y="585.80" font-size="12" fill="#a3a8ba" text-anchor="middle">9</text><text x="1101.95" y="585.80" font-size="12" fill="#a3a8ba" text-anchor="middle">11</text><text x="1141.16" y="585.80" font-size="12" fill="#a3a8ba" text-anchor="middle">13</text><text x="1180.37" y="585.80" font-size="12" fill="#a3a8ba" text-anchor="middle">15</text><text x="1219.58" y="585.80" font-size="12" fill="#a3a8ba" text-anchor="middle">17</text><text x="1258.79" y="585.80" font-size="12" fill="#a3a8ba" text-anchor="middle">19</text><text x="1298.00" y="585.80" font-size="12" fill="#a3a8ba" text-anchor="middle">21</text><text x="1337.21" y="585.80" font-size="12" fill="#a3a8ba" text-anchor="middle">23</text><circle cx="941.8" cy="395.8" r="7.3" stroke="#8893b1" stroke-width="1.15"/><path d="M941.8 394.5V399.6" stroke="#76809d" stroke-width="1.5"/><circle cx="941.8" cy="392.3" r="0.85" fill="#76809d"/><path d="M1229.6 394.5L1233.3 398.1L1237.0 394.5" stroke="#c0c5d6" stroke-width="1.2"/><g stroke="#c9cddf" stroke-width="1.25" stroke-linecap="butt"><path d="M1350.00 389.60H1355.80V395.30M1355.60 389.80L1350.10 395.30"/><path d="M1342.60 397.10V402.80H1348.40M1342.80 402.60L1348.30 397.10"/></g><rect x="852.5" y="612.8" width="504.5" height="38.2" rx="4" fill="#2a2e43"/><rect x="900.3" y="612.8" width="410.1" height="38.2" rx="4" fill="#3b4052"/><path d="M898.4 635.8V651" stroke="#424e6e" stroke-width="1"/><path d="M944.4 635.8V651" stroke="#424e6e" stroke-width="1"/><path d="M990.3 635.8V651" stroke="#424e6e" stroke-width="1"/><path d="M1036.5 635.8V651" stroke="#424e6e" stroke-width="1"/><path d="M1082.4 635.8V651" stroke="#424e6e" stroke-width="1"/><path d="M1128.2 635.8V651" stroke="#424e6e" stroke-width="1"/><path d="M1173.9 635.8V651" stroke="#424e6e" stroke-width="1"/><path d="M1219.9 635.8V651" stroke="#424e6e" stroke-width="1"/><path d="M1265.9 635.8V651" stroke="#424e6e" stroke-width="1"/><path d="M1311.6 635.8V651" stroke="#424e6e" stroke-width="1"/><path d="M852.55 641.89C856.32 639.88 855.07 639.88 863.87 635.85C872.67 631.82 868.27 633.08 878.96 629.81C889.65 626.54 885.25 627.67 895.94 626.04C906.63 624.41 900.98 624.91 911.04 624.91C921.10 624.91 916.70 624.59 926.13 626.04C935.56 627.49 930.53 626.61 939.34 629.25C948.15 631.89 943.75 631.13 952.55 633.96C961.35 636.79 956.32 636.29 965.75 637.74C975.18 639.19 970.79 638.93 980.85 638.30C990.91 637.67 984.62 637.92 995.94 635.85C1007.26 633.78 1002.23 634.72 1014.81 632.08C1027.39 629.44 1021.10 630.31 1033.68 627.92C1046.26 625.53 1041.23 626.36 1052.55 624.91C1063.87 623.46 1057.58 623.83 1067.64 623.58C1077.70 623.33 1073.31 623.14 1082.74 624.15C1092.17 625.16 1087.86 624.41 1095.94 626.60C1104.02 628.79 1100.00 627.69 1106.98 630.71C1113.96 633.73 1108.97 632.49 1116.89 635.66C1124.81 638.83 1120.18 637.71 1130.75 640.22C1141.32 642.73 1136.70 642.07 1148.59 643.19C1160.48 644.31 1154.53 644.12 1166.42 643.59C1178.31 643.06 1173.03 643.58 1184.25 641.60C1195.47 639.62 1189.53 640.94 1200.09 637.64C1210.65 634.34 1205.37 635.79 1215.94 631.70C1226.51 627.61 1221.88 628.86 1231.79 625.36C1241.70 621.86 1236.41 623.05 1245.66 621.20C1254.91 619.35 1250.28 619.74 1259.53 619.81C1268.78 619.88 1263.49 619.75 1273.40 621.40C1283.31 623.05 1278.02 622.32 1289.25 624.76C1300.48 627.20 1295.85 626.75 1307.08 628.73C1318.31 630.71 1312.37 629.72 1322.93 630.71C1333.49 631.70 1327.41 631.37 1338.77 631.70C1350.13 632.03 1350.92 631.70 1357.00 631.70" stroke="#a07cf0" stroke-width="2" stroke-linecap="butt"/><text x="854.40" y="645.40" font-size="9.8" fill="#e6e8f0" font-weight="bold" letter-spacing="-0.006">OCT. 19</text><text x="901.20" y="645.40" font-size="9.8" fill="#e6e8f0" font-weight="bold" letter-spacing="-0.426">JAN. 20</text><text x="946.90" y="645.40" font-size="9.8" fill="#e6e8f0" font-weight="bold" letter-spacing="-0.105">APR. 20</text><text x="993.10" y="645.40" font-size="9.8" fill="#e6e8f0" font-weight="bold" letter-spacing="-0.527">JUL. 20</text><text x="1038.80" y="645.40" font-size="9.8" fill="#e6e8f0" font-weight="bold" letter-spacing="-0.090">OCT. 20</text><text x="1084.60" y="645.40" font-size="9.8" fill="#e6e8f0" font-weight="bold" letter-spacing="-0.342">JAN. 21</text><text x="1130.80" y="645.40" font-size="9.8" fill="#e6e8f0" font-weight="bold" letter-spacing="-0.239">APR. 21</text><text x="1176.30" y="645.40" font-size="9.8" fill="#e6e8f0" font-weight="bold" letter-spacing="-0.460">JUL. 21</text><text x="1222.30" y="645.40" font-size="9.8" fill="#e6e8f0" font-weight="bold" letter-spacing="-0.123">OCT. 21</text><text x="1268.40" y="645.40" font-size="9.8" fill="#e6e8f0" font-weight="bold" letter-spacing="-0.376">JAN. 22</text><text x="1314.40" y="645.40" font-size="9.8" fill="#e6e8f0" font-weight="bold" letter-spacing="-0.122">APR. 22</text><rect x="896.6" y="624.5" width="7.4" height="15.2" rx="1.6" fill="#ffffff"/><path d="M899.35 629.2V635M901.25 629.2V635" stroke="#2a2f45" stroke-width="0.9"/><rect x="1306.8" y="624.5" width="7.4" height="15.2" rx="1.6" fill="#ffffff"/><path d="M1309.55 629.2V635M1311.45 629.2V635" stroke="#2a2f45" stroke-width="0.9"/><circle cx="856.3" cy="684.1" r="3.8" fill="#8a5cf6"/><circle cx="969.2" cy="684.1" r="3.8" fill="#0a84ff"/><circle cx="1056" cy="684.1" r="3.8" fill="#e9a212"/><circle cx="1142.6" cy="684.1" r="3.8" fill="#b94fdc"/></svg><span class="t" style="left:22.70px;top:32.00px;font-size:11.4px;color:#f3f4f9;font-weight:bold;letter-spacing:0.621px;">VOLATILITY</span><span class="t" style="left:323.80px;top:30.00px;font-size:13.2px;color:#c0c5d6;letter-spacing:0.306px;">By Portfolio</span><span class="t" style="left:423.50px;top:30.00px;font-size:13.4px;color:#7c5cfc;font-weight:bold;letter-spacing:-0.167px;">Benchmark</span><span class="t" style="left:38.20px;top:319.00px;font-size:12px;color:#e2e5ee;letter-spacing:-0.008px;">Global portfolio</span><span class="t" style="left:151.20px;top:319.00px;font-size:12px;color:#e2e5ee;letter-spacing:-0.103px;">Portfolio 1</span><span class="t" style="left:238.00px;top:319.00px;font-size:12px;color:#e2e5ee;letter-spacing:-0.063px;">Portfolio 2</span><span class="t" style="left:324.50px;top:319.00px;font-size:12px;color:#e2e5ee;letter-spacing:-0.055px;">Bitcoin</span></section>
<section class="panel" style="left:264px;top:732px;width:550px;height:130px"><svg class="a chart" style="left:0;top:0" width="550" height="130" viewBox="264 732 550 130" fill="none" font-family='"Liberation Sans", sans-serif'><path d="M320 813.6H791M320 843.9H791" stroke="#3b4763" stroke-width="1.3"/><path d="M319.95 836.36C321.30 839.07 322.32 845.87 325.03 846.52C327.74 847.17 327.56 842.75 330.11 838.80C332.66 834.85 332.41 831.69 334.58 831.69C336.75 831.69 336.45 833.11 338.24 838.80C340.03 844.49 340.47 849.23 341.28 853.02" stroke="#8262f4" stroke-width="1.12" stroke-linecap="butt"/><polyline points="354.49,853.02 358.56,843.27 363.64,853.02" stroke="#8262f4" stroke-width="1.12"/><polyline points="367.3,853.02 369.73,849.97 371.77,853.02" stroke="#8262f4" stroke-width="1.12"/><polyline points="405.3,853.02 410.38,848.96 413.42,846.93 416.47,847.94 418.91,853.02" stroke="#8262f4" stroke-width="1.12"/><polyline points="429.27,853.02 431.71,849.36 434.76,853.02" stroke="#8262f4" stroke-width="1.12"/><polyline points="327.67,853.02 331.12,846.93 334.78,843.27 337.02,853.02" stroke="#1fb0f2" stroke-width="1.12"/><text x="286.80" y="819.90" font-size="12" fill="#a3a8ba">2</text><text x="286.80" y="850.00" font-size="12" fill="#a3a8ba" letter-spacing="-0.544">1.5</text><circle cx="391.9" cy="769.6" r="7.3" stroke="#8893b1" stroke-width="1.15"/><path d="M391.9 768.3000000000001V773.4" stroke="#76809d" stroke-width="1.5"/><circle cx="391.9" cy="766.1" r="0.85" fill="#76809d"/><g stroke="#c9cddf" stroke-width="1.25" stroke-linecap="butt"><path d="M784.00 763.50H789.80V769.20M789.60 763.70L784.10 769.20"/><path d="M776.60 771.00V776.70H782.40M776.80 776.50L782.30 771.00"/></g></svg><div class="tg" style="left:245.3px;top:21.9px"><i></i></div><span class="t" style="left:22.80px;top:33.00px;font-size:11.4px;color:#f3f4f9;font-weight:bold;letter-spacing:0.433px;">RISK METRICS</span><span class="t" style="left:253.40px;top:32.00px;font-size:12.4px;color:#f1f3f8;letter-spacing:-0.474px;">Sharpe</span><span class="t" style="left:306.80px;top:32.00px;font-size:12.4px;color:#a7adc0;letter-spacing:-0.261px;">Sortino</span><span class="t" style="left:360.20px;top:32.00px;font-size:12.4px;color:#a7adc0;letter-spacing:-0.447px;">Calmar</span><span class="t" style="left:423.40px;top:31.00px;font-size:13.4px;color:#7c5cfc;font-weight:bold;letter-spacing:-0.167px;">Benchmark</span></section>
<section class="panel" style="left:830px;top:732px;width:550px;height:130px"><svg class="a chart" style="left:0;top:0" width="550" height="130" viewBox="830 732 550 130" fill="none" font-family='"Liberation Sans", sans-serif'><path d="M899.8 811.6H1357M899.8 836.4H1357" stroke="#3b4763" stroke-width="1.3"/><polyline points="899.78,850.58 902.63,853.02" stroke="#8262f4" stroke-width="1.12"/><polyline points="907.91,853.02 912.38,840.83 914.82,839.41 917.66,853.02" stroke="#8262f4" stroke-width="1.12"/><polyline points="899.78,835.75 924.57,837.38 935.75,845.3 959.12,838.39 973.34,844.89 981.47,837.17 990.62,837.99 996.71,848.35 1020.08,840.83 1024.15,835.75 1026.18,840.83 1031.26,842.25 1032.27,839.81 1033.29,842.25 1036.95,837.99 1047.52,847.54 1049.55,842.25 1058.69,839.81 1060.72,840.83 1062.15,846.93 1063.16,841.85 1067.84,841.85 1068.85,836.36 1071.9,835.34 1075.36,838.8 1076.57,844.89 1079.01,833.31 1081.45,836.77 1083.08,841.85 1084.09,835.75 1085.72,845.91 1087.75,837.78 1089.17,841.85 1094.25,838.8 1096.29,848.96 1097.3,838.8 1098.93,846.93 1100.96,834.73 1101.77,844.89 1105.02,841.85 1098,841.85 1100.03,834.73 1101.66,842.86 1102.47,835.75 1105.11,844.89 1107.14,836.36 1110.19,838.8 1115.27,850.99 1118.32,844.89 1123.4,845.91 1128.48,838.8 1130.51,841.85 1132.55,836.36 1134.58,846.93 1138.64,847.94 1143.72,842.86 1145.75,849.97 1148.8,832.7 1150.43,848.96 1152.46,835.75 1153.88,842.86 1156.93,852.01 1158.56,838.8 1160.59,839.81 1162.01,849.36 1169.12,847.94 1173.19,835.75 1176.24,843.88 1179.28,846.93 1186.4,841.24 1199.61,848.96 1201.64,843.88 1204.69,846.93 1211.8,846.93 1215.86,842.86 1219.93,843.27 1228.05,845.91 1232.12,844.89 1233.14,838.8 1235.17,849.36 1237.2,844.89 1238.22,848.96 1242.28,841.85 1254.47,850.58 1256.1,841.24 1257.52,848.96 1264.63,847.94 1266.66,844.89 1270.73,845.91 1272.35,841.24 1274.79,840.83 1276.83,836.36 1278.86,846.93 1281.91,834.73 1283.94,835.75 1285.97,845.91 1288,835.34 1296.13,847.94 1297.15,843.88 1299.18,849.36 1307.31,844.89 1310.36,846.52 1317.47,841.85 1321.53,848.96 1329.66,841.85 1333.72,839.81 1336.16,831.28 1341.85,836.77 1347.95,848.96 1357.09,836.36" stroke="#e55be6" stroke-width="1.12"/><text x="852.80" y="819.60" font-size="12" fill="#a3a8ba">100%</text><text x="852.80" y="841.80" font-size="12" fill="#a3a8ba" letter-spacing="-0.016">80%</text><circle cx="983.8" cy="769.6" r="7.3" stroke="#8893b1" stroke-width="1.15"/><path d="M983.8 768.3000000000001V773.4" stroke="#76809d" stroke-width="1.5"/><circle cx="983.8" cy="766.1" r="0.85" fill="#76809d"/><path d="M1230 768L1233.7 771.6L1237.4 768" stroke="#c0c5d6" stroke-width="1.2"/><g stroke="#c9cddf" stroke-width="1.25" stroke-linecap="butt"><path d="M1350.00 763.20H1355.80V768.90M1355.60 763.40L1350.10 768.90"/><path d="M1342.60 770.70V776.40H1348.40M1342.80 776.20L1348.30 770.70"/></g></svg><span class="t" style="left:22.80px;top:33.00px;font-size:11.4px;color:#f3f4f9;font-weight:bold;letter-spacing:1.187px;">MAX DRAWDOWN</span><span class="t" style="left:336.50px;top:31.00px;font-size:13.2px;color:#c0c5d6;letter-spacing:0.091px;">By Sector</span><span class="t" style="left:423.50px;top:31.00px;font-size:13.4px;color:#7c5cfc;font-weight:bold;letter-spacing:-0.180px;">Benchmark</span></section>
</main>
<aside id="side"><div class="hd"></div><div class="act"></div><svg class="a" style="left:0;top:0" width="207" height="400" viewBox="0 0 207 400" fill="none" stroke="#c3c8d9" stroke-width="1.15" stroke-linecap="round" stroke-linejoin="round">
<!-- logo -->
<path d="M23.5 21.2 L19.15 24.7 L19.15 27.7 L23.5 31.2" stroke="#1aa7ff" stroke-width="2.7" stroke-linecap="butt" stroke-linejoin="miter"/>
<path d="M25.4 21.2 L29.7 24.7 L29.7 27.7 L25.4 31.2" stroke="#7b57ff" stroke-width="2.7" stroke-linecap="butt" stroke-linejoin="miter"/>
<!-- collapse -->
<rect x="171.2" y="19.5" width="12.4" height="12" rx="1.1" stroke="#6d7692" stroke-width="1.1"/>
<path d="M175.2 19.8V31.2" stroke="#4a526b" stroke-width="1.7" stroke-linecap="butt"/>
<path d="M179.8 23.9L178.1 25.5L179.8 27.1" stroke="#8791ad" stroke-width="1.1"/>
<!-- wallet -->
<rect x="18.4" y="66.7" width="14.9" height="13.8" rx="3.8"/>
<path d="M22 70.3H26.3"/>
<path d="M33.3 71.2H29.6a2.2 2.2 0 0 0 0 4.4H33.3"/>
<circle cx="30.4" cy="73.4" r="0.5" fill="#c3c8d9" stroke-width="0.6"/>
<!-- dashboard -->
<rect x="19.6" y="109.7" width="4.8" height="7.6"/>
<rect x="19.6" y="120" width="4.8" height="4.2"/>
<rect x="27" y="109.7" width="4.8" height="4"/>
<rect x="27" y="116.4" width="4.8" height="7.8"/>
<!-- search -->
<circle cx="24.7" cy="159.1" r="5.4"/>
<path d="M28.7 163.2L33 167.2"/>
<!-- eye -->
<path d="M18.3 203.6C20.5 200.2 22.9 198.5 25.7 198.5S30.9 200.2 33.1 203.6C30.9 207 28.5 208.7 25.7 208.7S20.5 207 18.3 203.6Z"/>
<circle cx="25.7" cy="203.6" r="2.8"/>
<!-- query -->
<path d="M22.3 244L19.2 246.8L22.3 249.6"/>
<path d="M27.1 241.6L24.4 252"/>
<path d="M29.3 244L32.4 246.8L29.3 249.6"/>
<!-- simulation -->
<path d="M19.2 290.2H22.4"/>
<path d="M22.4 290.2C24.4 290.2 24.6 286.3 27.2 286.3H32.3"/>
<path d="M22.4 290.2C24.4 290.2 24.6 293.8 27.2 293.8H32.3"/>
<path d="M29.7 283.6L32.4 286.3L29.7 289"/>
<path d="M29.7 291.1L32.4 293.8L29.7 296.5"/>
<!-- trade -->
<path d="M19.2 330.4H32.4"/>
<path d="M28.9 326.8L32.5 330.4L28.9 334"/>
<path d="M32.4 336.6H19.2"/>
<path d="M22.7 333L19.1 336.6L22.7 340.2"/>
<!-- star -->
<path d="M25.70 370.60L27.25 375.37L32.26 375.37L28.21 378.31L29.76 383.08L25.70 380.13L21.64 383.08L23.19 378.31L19.14 375.37L24.15 375.37Z" stroke-linejoin="miter"/>
<!-- chevrons -->
<path d="M175.4 68.40L180.9 73.90L175.4 79.40"/><path d="M175.4 111.68L180.9 117.18L175.4 122.68"/><path d="M175.4 154.96L180.9 160.46L175.4 165.96"/><path d="M175.4 198.24L180.9 203.74L175.4 209.24"/><path d="M175.4 241.52L180.9 247.02L175.4 252.52"/><path d="M175.4 284.80L180.9 290.30L175.4 295.80"/></svg><nav><span class="t" style="left:36.50px;top:15.00px;font-size:19.4px;color:#ffffff;letter-spacing:0.917px;-webkit-text-stroke:0.5px #ffffff;">nuant</span><span class="t" style="left:44.30px;top:68.00px;font-size:12.6px;color:#c0c5d6;letter-spacing:-0.313px;">Portfolio</span><span class="t" style="left:44.30px;top:111.00px;font-size:12.6px;color:#c0c5d6;letter-spacing:-0.466px;">Dashboard</span><span class="t" style="left:44.30px;top:154.00px;font-size:12.6px;color:#c0c5d6;letter-spacing:-0.658px;">Explorer</span><span class="t" style="left:44.30px;top:198.00px;font-size:12.6px;color:#c0c5d6;letter-spacing:-0.324px;">Monitoring</span><span class="t" style="left:44.30px;top:241.00px;font-size:12.6px;color:#c0c5d6;letter-spacing:-0.699px;">Query</span><span class="t" style="left:44.30px;top:284.00px;font-size:12.6px;color:#c0c5d6;letter-spacing:-0.412px;">Simulation</span><span class="t" style="left:44.30px;top:328.00px;font-size:12.6px;color:#c0c5d6;letter-spacing:-0.709px;">Trade</span><span class="t" style="left:44.30px;top:371.00px;font-size:12.6px;color:#c0c5d6;letter-spacing:-0.141px;">Watchlist</span></nav></aside>
<svg class="a" style="left:0;top:0" width="6" height="4" viewBox="0 0 6 4"><path d="M-1 1.6Q2.2 1.2 4.6 -1" stroke="#1aa7ff" stroke-width="1.7" fill="none"/></svg>
</div>
</body>
</html>
